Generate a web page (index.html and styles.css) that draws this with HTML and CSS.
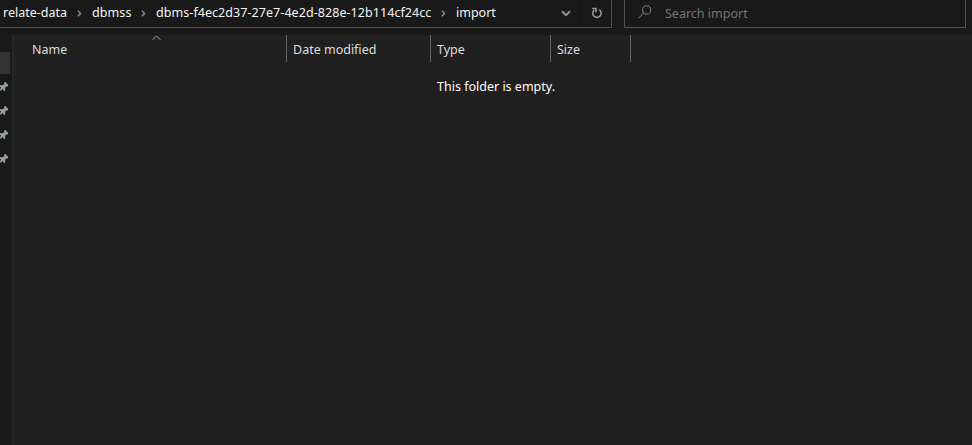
FILE: index.html
```html
<!DOCTYPE html>
<html lang="en">
<head>
<meta charset="utf-8">
<title>import</title>
<link rel="stylesheet" href="styles.css">
</head>
<body>
<svg class="defs">
  <symbol id="sep" viewBox="0 0 5 7"><path d="M.8.7 3.6 3.5.8 6.3"/></symbol>
  <symbol id="pin" viewBox="0 0 8 10"><path d="M4 .5 5.5 0 8 2.8V4.2L6.5 4.6 5 6 5.4 8.2 4.6 9.2 2.4 7.2 0 9V7.2L1 5.8 0 4.6V3.1L2.8 3.3 4.4 1.8Z"/></symbol>
</svg>
<header class="toolbar">
  <nav class="address">
    <ol class="crumbs">
      <li><span>relate-data</span><svg class="sep"><use href="#sep"/></svg></li>
      <li><span class="short">dbmss</span><svg class="sep"><use href="#sep"/></svg></li>
      <li><span class="long">dbms-f4ec2d37-27e7-4e2d-828e-12b114cf24cc</span><svg class="sep"><use href="#sep"/></svg></li>
      <li><span>import</span></li>
    </ol>
    <div class="drop"><svg width="10" height="7" viewBox="0 0 10 7"><path d="M1 1.2 5 5.2 9 1.2"/></svg></div>
    <div class="refresh"><svg width="12" height="12" viewBox="0 0 12 12"><path d="M8.2 2.6A4.2 4.2 0 1 1 3.3 2.9M1.2 1.5H4.9V5.2"/></svg></div>
  </nav>
  <div class="search">
    <svg width="14" height="14" viewBox="0 0 14 14"><circle cx="8.7" cy="5" r="4.1"/><path d="M5.7 8 .6 13.1"/></svg>
    <span>Search import</span>
  </div>
</header>
<main class="body">
  <aside class="tree">
    <div class="selected"></div>
    <svg class="pin"><use href="#pin"/></svg>
    <svg class="pin"><use href="#pin"/></svg>
    <svg class="pin"><use href="#pin"/></svg>
    <svg class="pin"><use href="#pin"/></svg>
  </aside>
  <section class="files">
    <div class="columns">
      <div class="col name"><span>Name</span><svg class="sort" width="9" height="6" viewBox="0 0 9 6"><path d="M.6 4.8 4.5.9 8.4 4.8"/></svg></div>
      <div class="col"><span>Date modified</span></div>
      <div class="col"><span>Type</span></div>
      <div class="col"><span>Size</span></div>
    </div>
    <p class="empty">This folder is empty.</p>
  </section>
</main>
</body>
</html>
```
FILE: styles.css
```css
* { box-sizing: border-box; }
body {
  margin: 0;
  width: 972px;
  height: 445px;
  overflow: hidden;
  background: #191919;
  color: #f4f4f4;
  font: 12.5px/18px "Noto Sans", "Open Sans", sans-serif;
  white-space: nowrap;
}
svg { display: block; fill: none; flex: none; }
.defs { display: none; }
.toolbar { display: flex; height: 35px; align-items: flex-start; gap: 12px; }
.address {
  display: flex;
  width: 612px;
  height: 28px;
  border: solid #535353;
  border-width: 0 1px 1px 0;
}
.crumbs {
  display: grid;
  grid-template-columns: 89px 64px 300px 1fr;
  width: 550px;
  height: 26px;
  margin: 0;
  padding: 0 0 0 3px;
  list-style: none;
}
.crumbs li { display: flex; align-items: center; justify-content: space-between; padding-right: 10px; }
.short { letter-spacing: .1px; }
.long { letter-spacing: .06px; }
.sep { width: 5px; height: 7px; stroke: #8c8c8c; stroke-width: 1.5; }
.drop { width: 31px; padding: 10px 0 0 11px; border-right: 1px solid #141414; }
.drop svg { stroke: #929292; stroke-width: 2; }
.refresh { padding: 7px 0 0 10px; }
.refresh svg { stroke: #929292; stroke-width: 1.7; }
.search {
  display: flex;
  width: 342px;
  height: 28px;
  border: solid #535353;
  border-width: 0 1px 1px;
  padding: 5px 0 0 13px;
  gap: 13px;
  color: #757575;
}
.search svg { stroke: #858585; }
.body { display: flex; height: 410px; }
.tree { width: 12px; height: 410px; padding-top: 17px; }
.selected { width: 10px; height: 22px; background: #333; margin-bottom: 8px; }
.pin { width: 8px; height: 10px; margin-bottom: 14px; fill: #929ca3; }
.files { flex: 1; background: #202020; border-left: 2px solid #272727; }
.columns { display: grid; grid-template-columns: 273px 144px 120px 80px; height: 27px; color: #dedede; }
.col { display: flex; border-right: 1px solid #636363; padding: 6px 0 0 6px; }
.name { padding-left: 18px; position: relative; }
.sort { position: absolute; left: 138px; top: 0; stroke: #a5a5a5; }
.empty { margin: 16px 0 0 423px; color: #fff; }
```
